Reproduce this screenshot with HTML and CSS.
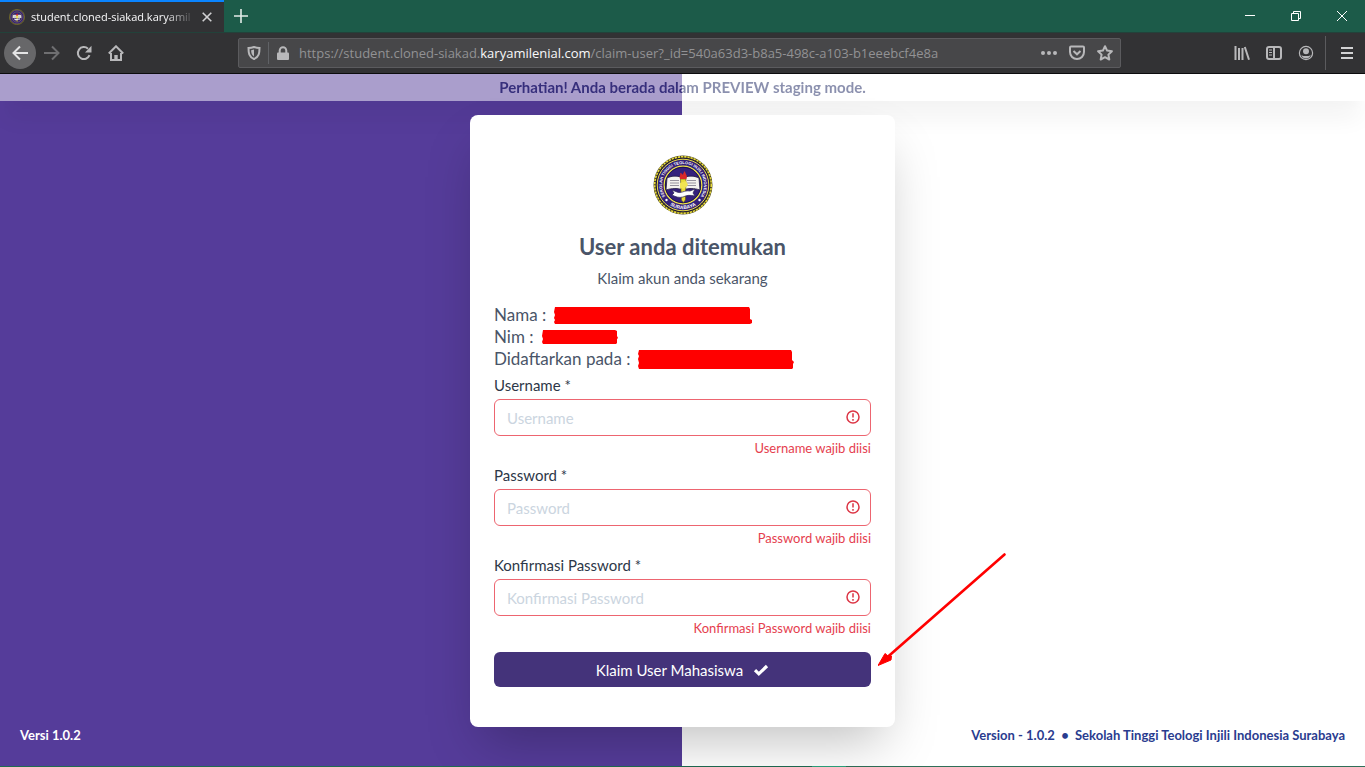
FILE: index.html
```html
<!DOCTYPE html>
<html lang="id">
<head>
<meta charset="utf-8">
<meta name="viewport" content="width=device-width, initial-scale=1">
<title>Klaim User</title>
<link rel="stylesheet" href="styles.css">
</head>
<body>
<svg class="defs" aria-hidden="true">
  <symbol id="seal" viewBox="0 0 60 60">
    <circle cx="30" cy="30" r="29.5" fill="#4a4320"/>
    <circle cx="30" cy="30" r="28.3" fill="none" stroke="#e6da3c" stroke-width="1.6" stroke-dasharray="2.2 1"/>
    <circle cx="30" cy="30" r="26.6" fill="#33207a" stroke="#16103c" stroke-width="1"/>
    <circle cx="30" cy="30" r="25.8" fill="none" stroke="#e9df45" stroke-width="1"/>
    <circle cx="30" cy="30" r="18.8" fill="#34207c" stroke="#f0e648" stroke-width="1.3"/>
    <circle cx="30" cy="30" r="17.7" fill="none" stroke="#171040" stroke-width=".8"/>
    <path d="M14 23c5-2.5 11-2.5 16 0 5-2.5 11-2.5 16 0l1 12c-6-2-12-2-17 0-5-2-11-2-17 0z" fill="#f4f2ee" stroke="#20183f" stroke-width=".8"/>
    <path d="M17 25.500h9M17 28h9M17 30.500h9M34 25.500h9M34 28h9M34 30.500h9" stroke="#8c8894" stroke-width=".9"/>
    <path d="M27.500 24h5.500l-.6 21-2 2.500-2-2.500z" fill="#e9dc36" stroke="#554b14" stroke-width=".6"/>
    <path d="M27 24c-1-3 1-4 0-6 2 0 2 1 3 2 0-2 1-3 2-4 0 3 3 4 1.500 8z" fill="#d92828"/>
    <path d="M27 28l6-2 2 4-4 4-4-1z" fill="#f1e553"/>
    <path d="M19 35l5 2c4 2 7-2 13-1l5-2-2 4 2 3c-5-1-8-1-12 1-4 1-7 0-11-2l2-2z" fill="#fff" stroke="#2a2352" stroke-width=".7"/>
  </symbol>
</svg>

<header class="chrome">
  <div class="tabs">
    <div class="tab">
      <svg class="fav" aria-hidden="true"><use href="#seal"/></svg>
      <span class="tab-title">student.cloned-siakad.karyamil</span>
      <button class="tab-close" aria-label="Close tab"><svg width="10" height="10" viewBox="0 0 10 10"><path d="M.7.7l8.600 8.600M9.300.7L.7 9.300" stroke="#d0d0d2" stroke-width="1.600"/></svg></button>
    </div>
    <button class="new-tab" aria-label="New tab"><svg width="14" height="14" viewBox="0 0 14 14"><path d="M7 0v14M0 7h14" stroke="#e2ece8" stroke-width="1.600"/></svg></button>
    <div class="win">
      <button aria-label="Minimize"><svg width="10" height="10" viewBox="0 0 10 10"><path d="M0 4.500h10" stroke="#fff"/></svg></button>
      <button aria-label="Restore"><svg width="10" height="10" viewBox="0 0 10 10"><path d="M.5 2.500h7v7h-7zM2.500 2.500v-2h7v7h-2" fill="none" stroke="#fff"/></svg></button>
      <button aria-label="Close"><svg width="10" height="10" viewBox="0 0 10 10"><path d="M0 0l10 10M10 0L0 10" stroke="#fff"/></svg></button>
    </div>
  </div>
  <div class="toolbar">
    <div class="nav">
      <button class="back" aria-label="Back"><svg width="16" height="16" viewBox="0 0 16 16"><path d="M16 8H1.500M8 1.500L1.500 8 8 14.500" class="ln"/></svg></button>
      <button class="dim" aria-label="Forward"><svg width="16" height="16" viewBox="0 0 16 16"><path d="M0 8h14.500M8 1.500L14.500 8 8 14.500" class="ln"/></svg></button>
      <button aria-label="Reload"><svg width="16" height="16" viewBox="0 0 16 16"><path d="M13.500 10.200A6 6 0 1 1 12 3.700" class="ln"/><path d="M15.500.8v6.700H9z" fill="currentColor"/></svg></button>
      <button aria-label="Home"><svg width="16" height="16" viewBox="0 0 16 16"><path d="M.8 8.500L8 1.300l7.200 7.200M3 8v7h10V8" class="ln"/><path d="M6.300 15v-5h3.400v5z" fill="currentColor"/></svg></button>
    </div>
    <div class="url">
      <svg width="14" height="14" viewBox="0 0 14 14"><path d="M7 1C5 1.600 3 1.900 1.500 2c0 5 .5 9 5.500 11 5-2 5.500-6 5.500-11C11 1.900 9 1.600 7 1z" class="ln"/><path d="M7 3.500v7C4.800 9 4.200 7 4.100 4.200z" fill="currentColor"/></svg>
      <span class="bar"></span>
      <svg width="14" height="14" viewBox="0 0 14 14"><path d="M3.700 7V4.500a3.300 3.300 0 0 1 6.600 0V7" class="ln"/><rect x="1" y="6.500" width="12" height="7.500" rx="1" fill="currentColor"/></svg>
      <span class="address" role="textbox" tabindex="0" aria-label="Address">https://student.cloned-siakad.<b>karyamilenial.com</b>/claim-user?_id=540a63d3-b8a5-498c-a103-b1eeebcf4e8a</span>
      <button aria-label="Page actions"><svg width="16" height="16" viewBox="0 0 16 16" fill="currentColor"><circle cx="2" cy="8" r="2"/><circle cx="8" cy="8" r="2"/><circle cx="14" cy="8" r="2"/></svg></button>
      <button aria-label="Save to Pocket"><svg width="16" height="16" viewBox="0 0 16 16"><path d="M1 2.500Q1 1.500 2 1.500h12q1 0 1 1V7a7 7 0 0 1-14 0z" class="ln"/><path d="M4.500 6L8 9.300 11.500 6" class="ln"/></svg></button>
      <button aria-label="Bookmark"><svg width="16" height="16" viewBox="0 0 16 16"><path d="M8 1.200l2.100 4.400 4.800.6-3.500 3.400.9 4.900L8 12.200l-4.300 2.300.9-4.900L1.100 6.200l4.800-.6z" class="ln" stroke-linejoin="round"/></svg></button>
    </div>
    <div class="tools">
      <button aria-label="Library"><svg width="16" height="16" viewBox="0 0 16 16"><path d="M1.500 1v14M5 3v12M8.500 3v12M10.800 2l4.200 12.700" class="ln"/></svg></button>
      <button aria-label="Sidebars"><svg width="16" height="16" viewBox="0 0 16 16"><rect x="1" y="2" width="14" height="12" rx="2" class="ln"/><path d="M8 2v12" class="ln"/><path d="M3 5h3M3 7.500h3M3 10h3" stroke="currentColor"/></svg></button>
      <button aria-label="Account"><svg width="16" height="16" viewBox="0 0 16 16"><circle cx="8" cy="8" r="6.600" fill="none" stroke="currentColor" stroke-width="1.200"/><circle cx="8" cy="6.200" r="3" fill="currentColor"/><path d="M3.300 10c1 1 2.800 1 4.700 1s3.700 0 4.700-1c-1 2.600-2.700 3.500-4.700 3.500S4.300 12.600 3.300 10z" fill="currentColor"/></svg></button>
      <span class="sep"></span>
      <button class="menu" aria-label="Menu"><svg width="12" height="12" viewBox="0 0 12 12"><path d="M0 1h12M0 6h12M0 11h12" class="ln"/></svg></button>
    </div>
  </div>
</header>

<main class="page">
  <div class="banner">Perhatian! Anda berada dalam PREVIEW staging mode.</div>
  <div class="columns">
    <p class="foot foot-left">Versi 1.0.2</p>
    <section class="card">
      <svg class="logo" viewBox="0 0 60 60" role="img" aria-label="Logo">
        <use href="#seal"/>
        <path id="arc-top" d="M14.150 43.770A21 21 0 1 1 45.850 43.770" fill="none"/>
        <path id="arc-bottom" d="M11 44.700A24 24 0 0 0 49 44.700" fill="none"/>
        <text class="seal-text"><textPath href="#arc-top" startOffset="50%" text-anchor="middle">SEKOLAH TINGGI TEOLOGI INJILI INDONESIA</textPath></text>
        <text class="seal-text seal-city"><textPath href="#arc-bottom" startOffset="50%" text-anchor="middle">SURABAYA</textPath></text>
        <circle cx="13.500" cy="45" r="1.200" fill="#fff"/><circle cx="46.500" cy="45" r="1.200" fill="#fff"/>
      </svg>
      <h1>User anda ditemukan</h1>
      <p class="sub">Klaim akun anda sekarang</p>
      <ul class="info">
        <li>Nama : <svg width="198" height="17" viewBox="0 0 198 17"><path d="M1 0h194l1 2v10l2 1v3l-2 1H1l-1-2 1-2-1-2 1-3-1-3z"/></svg></li>
        <li>Nim : <svg width="76" height="15" viewBox="0 0 76 15"><path d="M1 0h72l2 1v5l1 2-1 1v4l-1 1H1l-1-2 1-3-1-3z"/></svg></li>
        <li>Didaftarkan pada : <svg width="156" height="19" viewBox="0 0 156 19"><path d="M1 0h152l1 2v8l2 2-1 2v4l-1 1H1l-1-3 1-3-1-4 1-3-1-2z"/></svg></li>
      </ul>
      <form>
        <div class="field">
          <label for="user">Username *</label>
          <div class="control"><input id="user" type="text" placeholder="Username"><svg class="warn" viewBox="0 0 14 14"><circle cx="7" cy="7" r="6"/><path d="M7 3.300v4.200M7 9v1.700"/></svg></div>
          <p class="error">Username wajib diisi</p>
        </div>
        <div class="field">
          <label for="pass">Password *</label>
          <div class="control"><input id="pass" type="password" placeholder="Password"><svg class="warn" viewBox="0 0 14 14"><circle cx="7" cy="7" r="6"/><path d="M7 3.300v4.200M7 9v1.700"/></svg></div>
          <p class="error">Password wajib diisi</p>
        </div>
        <div class="field">
          <label for="confirm">Konfirmasi Password *</label>
          <div class="control"><input id="confirm" type="password" placeholder="Konfirmasi Password"><svg class="warn" viewBox="0 0 14 14"><circle cx="7" cy="7" r="6"/><path d="M7 3.300v4.200M7 9v1.700"/></svg></div>
          <p class="error">Konfirmasi Password wajib diisi</p>
        </div>
        <div class="action">
          <button class="submit" type="submit">Klaim User Mahasiswa <svg width="16" height="12" viewBox="0 0 16 12"><path d="M2 6.200l3.800 3.600L14 2" fill="none" stroke="#fff" stroke-width="3.200"/></svg></button>
          <svg class="arrow" width="128" height="114" viewBox="0 0 128 114"><path d="M126.500 1.500L9 104.500" stroke="#f00" stroke-width="2.600" stroke-linecap="round"/><path d="M0 112.500L7 100.500l2.500 2 4 .500-.5 4z" fill="#f00" stroke="#f00"/></svg>
        </div>
      </form>
    </section>
    <p class="foot foot-right">Version - 1.0.2 &nbsp;•&nbsp; Sekolah Tinggi Teologi Injili Indonesia Surabaya</p>
  </div>
</main>
<div class="taskbar"></div>
</body>
</html>
```
FILE: styles.css
```css
* { box-sizing: border-box; }
body {
  margin: 0;
  min-height: 100vh;
  display: flex;
  flex-direction: column;
  font-family: Lato, "Noto Sans", sans-serif;
  color: #4a5568;
}
h1, p, ul { margin: 0; padding: 0; }
button { border: 0; padding: 0; background: none; color: inherit; font: inherit; }
svg { display: block; flex: none; }
.defs { position: absolute; width: 0; height: 0; }

/* Browser window */
.chrome { font-family: "Open Sans", "Noto Sans", sans-serif; color: #b8b8ba; border-bottom: 1px solid #0c0c0d; }
.ln { fill: none; stroke: currentColor; stroke-width: 2; }
.chrome button { display: grid; place-items: center; }
.tabs { display: flex; height: 32px; background: #1c5b49; }
.tab {
  display: flex; align-items: center; gap: 6px;
  width: 224px; padding: 0 11px 0 9px;
  background: #323234; border-top: 2px solid #0a84ff;
}
.fav { width: 16px; height: 16px; }
.tab-title {
  flex: 1; white-space: nowrap;
  font-size: 11px; line-height: 20px; color: #f9f9fa;
  mask-image: linear-gradient(to right, #000 82%, transparent);
}
.tab-close { width: 12px; height: 20px; }
.new-tab { width: 34px; }
.win { display: flex; margin-left: auto; }
.win button { width: 46px; }
.toolbar {
  display: flex; align-items: center; height: 41px; padding-left: 4px;
  background: #323234; border-top: 1px solid #22423a;
}
.nav, .tools { display: flex; align-items: center; }
.nav button, .tools button { width: 32px; height: 32px; }
.nav .back { background: #676769; border-radius: 50%; color: #e4e4e5; }
.nav .dim { color: #6f6f71; }
.url {
  flex: 1; min-width: 0; margin: 0 105px 0 106px;
  height: 30px; display: flex; align-items: center;
  padding: 0 1px 0 8px;
  background: #474749; border: 1px solid #5b5b5e; border-radius: 2px;
}
.bar { width: 1px; height: 22px; margin: 0 7px; background: #606266; }
.address {
  flex: 1; min-width: 0; margin-left: 9px; overflow: hidden; white-space: nowrap;
  font-size: 13px; line-height: 24px; color: #929294;
}
.address b { font-weight: 400; color: #f9f9fa; }
.url button { width: 28px; height: 28px; }
.sep { width: 1px; height: 34px; margin: 0 3px; background: #5b5b5e; }
.tools .menu { width: 36px; }
.tools .menu svg { color: #d2d2d4; }

/* Page */
.page {
  flex: 1; display: flex; flex-direction: column;
  background: linear-gradient(to right, #553c9a 50%, #fff 50%);
}
.banner {
  position: relative; z-index: 1;
  background: #fff; opacity: .5; text-align: center;
  color: #1a2460; font-size: 15px; font-weight: 700; line-height: 27px;
  box-shadow: 0 20px 25px -5px rgba(0, 0, 0, .13), 0 10px 10px -5px rgba(0, 0, 0, .04);
}
.columns {
  flex: 1; display: grid; grid-template-columns: 1fr 425px 1fr;
  align-items: start; padding-top: 14px;
}
.card {
  position: relative; z-index: 2;
  background: #fff; border-radius: 8px; padding: 40px 24px;
  box-shadow: 0 25px 50px -12px rgba(0, 0, 0, .25);
}
.logo { width: 60px; height: 60px; margin: 0 auto; overflow: visible; }
.seal-text { font: 700 4px "Liberation Sans", sans-serif; fill: #fff; }
.seal-city { font-size: 5px; }
h1 { margin-top: 18px; font-size: 22px; line-height: 28px; font-weight: 700; text-align: center; }
.sub { margin-top: 7px; font-size: 15px; line-height: 20px; text-align: center; }
.info { margin-top: 16px; list-style: none; font-size: 17px; line-height: 22px; }
.info li { display: flex; align-items: center; gap: 8px; height: 22px; }
.info svg { fill: #f00; }
form { margin-top: 5px; }
.field { display: flex; flex-direction: column; gap: 3px; margin-bottom: 8px; }
label { font-size: 15px; line-height: 21px; color: #2d3748; }
.control { position: relative; }
input {
  display: block; width: 100%; height: 37px; padding: 0 36px 0 12px;
  border: 1px solid #ed6570; border-radius: 6px; background: #fff;
  font: inherit; font-size: 15px; color: #2d3748;
}
input::placeholder { color: #cbd5e0; opacity: 1; }
.warn { position: absolute; right: 11px; top: 11px; width: 14px; height: 14px; fill: none; stroke: #dc3545; stroke-width: 1.5; }
.error { font-size: 13px; line-height: 18px; text-align: right; color: #e53e4e; }
.action { position: relative; margin-top: 15px; }
.submit {
  display: flex; align-items: center; justify-content: center; gap: 10px;
  width: 100%; height: 35px; border-radius: 6px;
  background: #44337a; color: #fff; font-size: 15px;
}
.arrow { position: absolute; left: calc(100% + 7px); bottom: 20px; fill: none; }
.foot { align-self: end; padding: 0 20px 22px; font-size: 13px; line-height: 18px; font-weight: 700; white-space: nowrap; }
.foot-left { color: #fff; }
.foot-right { color: #2a3c8f; text-align: right; }
.taskbar { height: 1px; background: linear-gradient(to right, #1f6b52 59.5%, #2ba37c 59.5% 62%, #2f6f58 62%); }
```
